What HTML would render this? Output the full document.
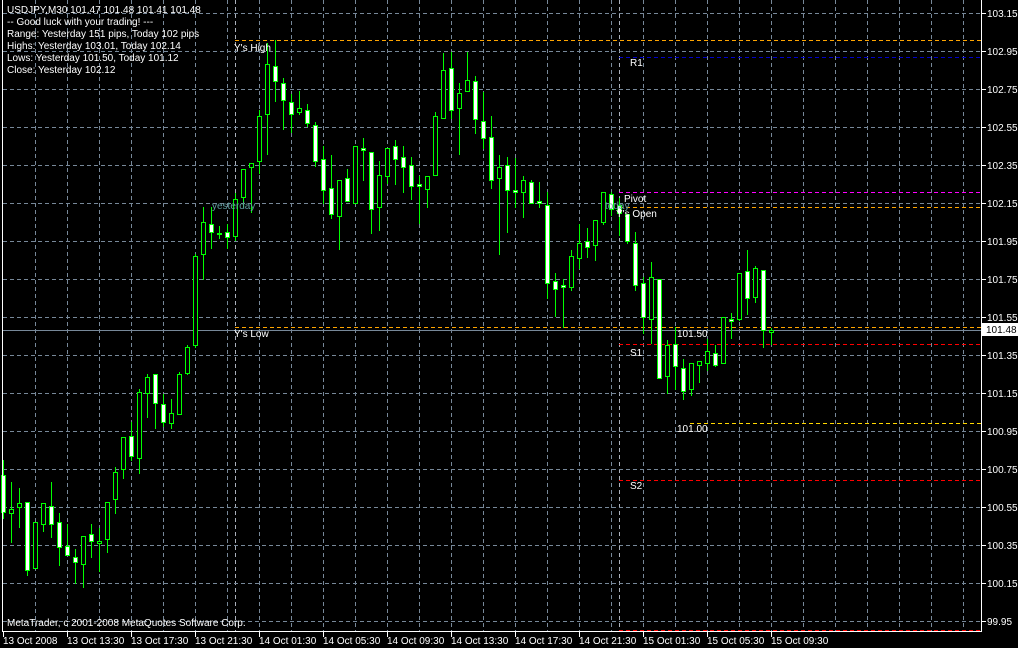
<!DOCTYPE html>
<html><head><meta charset="utf-8">
<style>
html,body{margin:0;padding:0;background:#000;width:1018px;height:648px;overflow:hidden}
svg{display:block}
text{font-family:"Liberation Sans",sans-serif;font-size:10px}
</style></head><body>
<svg id="c" width="1018" height="648" xmlns="http://www.w3.org/2000/svg">
<rect width="1018" height="648" fill="#000"/>
<g id="grid" stroke="#778899" stroke-width="1" stroke-dasharray="4,3"></g>
<g id="lv"></g>
<g id="cd"></g>
<g id="tx" fill="#fff"></g>
<line x1="2.5" y1="0" x2="2.5" y2="632" stroke="#fff"/>
<line x1="981.5" y1="0" x2="981.5" y2="632" stroke="#fff"/>
<line x1="2" y1="631.5" x2="982" y2="631.5" stroke="#fff"/>
</svg>
<script>
var NS="http://www.w3.org/2000/svg";
function el(p,n,a,t){var e=document.createElementNS(NS,n);for(var k in a)e.setAttribute(k,a[k]);if(t!=null)e.textContent=t;document.getElementById(p).appendChild(e);return e;}
// grid
for(var x=35;x<=963;x+=32)el('grid','line',{x1:x+.5,y1:0,x2:x+.5,y2:631});
el('grid','line',{x1:235.5,y1:0,x2:235.5,y2:631,stroke:'#aab0bb'});
el('grid','line',{x1:619.5,y1:0,x2:619.5,y2:631,stroke:'#aab0bb'});
var prices=["103.15","102.95","102.75","102.55","102.35","102.15","101.95","101.75","101.55","101.35","101.15","100.95","100.75","100.55","100.35","100.15","99.95"];
for(var i=0;i<17;i++){var y=13+38*i;el('grid','line',{x1:3,y1:y+.5,x2:981,y2:y+.5});
 el('tx','line',{x1:982,y1:y+.5,x2:986,y2:y+.5,stroke:'#fff'});
 el('tx','text',{x:987,y:y+4},prices[i]);}
// levels
function lv(x1,y,col,dash,x2){el('lv','line',{x1:x1,y1:y+.5,x2:x2||981,y2:y+.5,stroke:col,'stroke-dasharray':dash||'4,3'});}
lv(235,40,'#ffa500');lv(619,57,'#0000c8');lv(619,192,'#ff00ff');lv(619,207,'#ffa500');
lv(235,327,'#ffa500');el('lv','line',{x1:3,y1:330.5,x2:981,y2:330.5,stroke:'#778899'});
lv(619,344,'#ff0000');lv(690,423,'#ffd700');lv(619,480,'#ff0000');lv(619,630,'#ff0000');
// candles [wickTop, bodyTop, bodyBot, wickBot, white]
var D=[[460,475,512,518,1],[482,509,513,542,0],[488,503,507,527,0],[502,502,570,575,1],[522,522,568,568,0],[503,503,524,531,0],[482,506,524,537,1],[513,522,547,565,1],[524,546,555,555,1],[549,557,562,583,1],[536,536,564,587,0],[524,534,541,557,1],[528,541,543,571,0],[502,502,539,552,0],[467,472,499,513,0],[437,437,469,478,0],[422,436,456,460,1],[389,392,458,473,0],[374,377,393,417,0],[374,374,403,428,1],[394,404,422,426,1],[399,413,423,428,0],[372,374,414,414,0],[345,347,373,374,0],[254,256,345,347,0],
[207,222,254,279,0],[207,224,232,248,1],[226,233,234,238,0],[224,232,237,248,1],[193,199,236,240,0],[169,169,197,206,0],[163,163,167,212,0],[110,116,161,173,0],[43,64,114,154,0],[40,66,81,101,1],[78,83,100,129,1],[94,102,114,132,1],[91,108,112,114,0],[104,110,123,126,1],[122,125,161,166,1],[146,159,190,203,1],[155,188,214,218,1],[180,180,216,249,0],[169,178,201,201,1],[146,146,203,203,0],[138,148,150,180,1],[152,152,209,233,1],[161,175,207,230,0],[148,148,176,183,0],
[140,146,159,184,1],[146,157,167,192,1],[157,165,186,199,1],[176,184,186,223,1],[176,176,189,207,0],[112,116,175,175,0],[53,70,118,118,0],[52,68,110,118,1],[83,93,108,154,0],[52,80,91,91,0],[76,81,119,133,1],[92,121,138,148,1],[116,137,180,188,1],[155,167,178,254,0],[157,165,190,232,1],[158,190,192,207,1],[176,180,192,217,0],[180,182,203,203,1],[182,201,203,207,1],[192,205,283,298,1],[273,281,289,316,1],[279,285,287,327,1],[250,256,287,290,0],[224,243,258,268,0],[228,241,247,257,1],[220,220,245,260,0],[192,192,222,224,0],
[192,194,209,215,1],[198,205,213,235,1],[214,214,241,243,1],[232,243,285,290,1],[277,283,317,333,1],[262,277,319,343,0],[279,279,378,378,1],[340,345,376,393,0],[327,344,366,389,1],[359,368,391,399,1],[363,363,389,395,0],[361,361,365,382,0],[339,351,363,370,0],[345,353,365,366,1],[317,317,363,363,0],[313,319,321,338,1],[273,273,319,320,0],[250,271,298,314,1],[266,268,297,302,0],[270,270,330,347,1],[328,330,332,344,0]];
for(var i=0;i<D.length;i++){var c=D[i],cx=3+8*i;
 el('cd','line',{x1:cx+.5,y1:c[0],x2:cx+.5,y2:c[3]+1,stroke:'#00ff00'});
 var h=Math.max(c[2]-c[1],1);
 el('cd','rect',{x:cx-1.5,y:c[1]+.5,width:4,height:h,fill:c[4]?'#fff':'#000',stroke:'#00ff00'});}
// texts
var info=["USDJPY,M30  101.47 101.48 101.41 101.48","-- Good luck with your trading! ---","Range: Yesterday 151 pips, Today 102 pips","Highs: Yesterday 103.01, Today 102.14","Lows:  Yesterday 101.50, Today 101.12","Close: Yesterday 102.12"];
for(var i=0;i<info.length;i++)el('tx','text',{x:7,y:13+12*i,'xml:space':'preserve'},info[i]);
el('tx','text',{x:234,y:51},"Y's High");
el('tx','text',{x:234,y:337},"Y's Low");
el('tx','text',{x:212,y:209,fill:'#5f9ea0'},"yesterday");
el('tx','text',{x:605,y:209,fill:'#5f9ea0'},"today");
el('tx','text',{x:630,y:66},"R1");
el('tx','text',{x:624,y:202},"Pivot");
el('tx','text',{x:616,y:217},"Y's Open");
el('tx','text',{x:677,y:337},"101.50");
el('tx','text',{x:630,y:356},"S1");
el('tx','text',{x:677,y:432},"101.00");
el('tx','text',{x:630,y:489},"S2");
el('tx','text',{x:7,y:626},"MetaTrader, c 2001-2008 MetaQuotes Software Corp.");
el('tx','rect',{x:982,y:323,width:36,height:13,fill:'#fff'});
el('tx','text',{x:986,y:333,fill:'#000'},"101.48");
var tl=["13 Oct 2008","13 Oct 13:30","13 Oct 17:30","13 Oct 21:30","14 Oct 01:30","14 Oct 05:30","14 Oct 09:30","14 Oct 13:30","14 Oct 17:30","14 Oct 21:30","15 Oct 01:30","15 Oct 05:30","15 Oct 09:30"];
for(var i=0;i<tl.length;i++){var x=3+64*i;el('tx','line',{x1:x+.5,y1:632,x2:x+.5,y2:637,stroke:'#fff'});el('tx','text',{x:x,y:644},tl[i]);}
</script>
</body></html>
